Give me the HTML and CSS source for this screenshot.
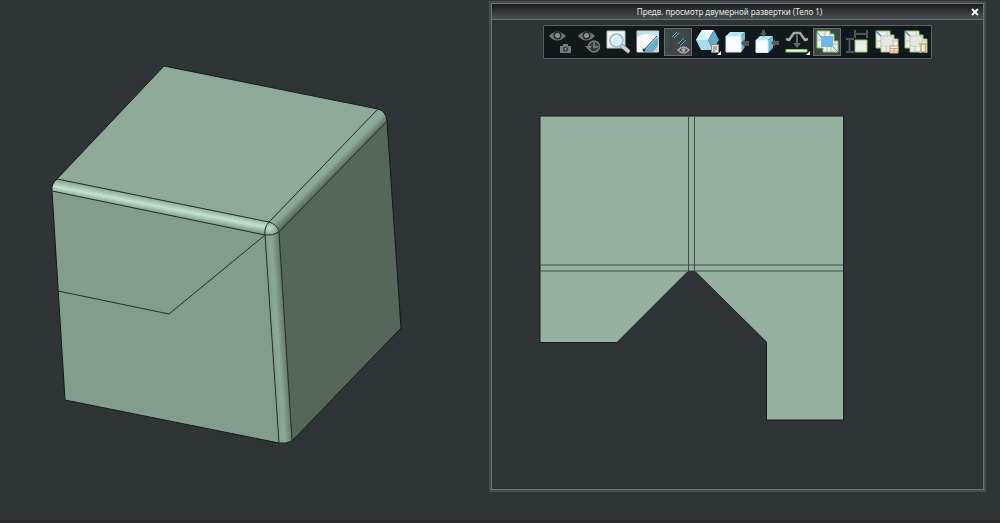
FILE: index.html
```html
<!DOCTYPE html>
<html lang="ru">
<head>
<meta charset="utf-8">
<title>Предв. просмотр двумерной развертки</title>
<link rel="stylesheet" href="styles.css">
</head>
<body>
<main class="workspace">
  <section class="scene" aria-label="Модель">
    <svg class="model" viewBox="0 0 489 520" preserveAspectRatio="xMinYMin meet">
      <defs>
        <linearGradient id="rollLeft" gradientUnits="userSpaceOnUse" x1="160" y1="200" x2="157.500" y2="213">
          <stop offset="0" stop-color="#8faa99"/><stop offset=".5" stop-color="#c2e3d0"/><stop offset="1" stop-color="#829d8c"/>
        </linearGradient>
        <linearGradient id="rollRight" gradientUnits="userSpaceOnUse" x1="323" y1="165" x2="334" y2="176">
          <stop offset="0" stop-color="#8eaa98"/><stop offset=".45" stop-color="#8ca997"/><stop offset="1" stop-color="#56665b"/>
        </linearGradient>
        <linearGradient id="rollDown" gradientUnits="userSpaceOnUse" x1="272" y1="340" x2="287" y2="339">
          <stop offset="0" stop-color="#839e8d"/><stop offset=".4" stop-color="#8baa98"/><stop offset="1" stop-color="#5d6f63"/>
        </linearGradient>
        <radialGradient id="corner" cx=".35" cy=".45" r=".7">
          <stop offset="0" stop-color="#c0e2ce"/><stop offset="1" stop-color="#789482"/>
        </radialGradient>
      </defs>
      <path fill="#8ea998" d="M164 66 378 109 269 222 57 179Z"/>
      <path fill="#829d8c" d="M52 191 265 235 279 443 65 400Z"/>
      <path fill="#56665b" d="M387 121 401 328 292 441 279 232Z"/>
      <path fill="url(#rollLeft)" d="M57 179 269 222 265 235 52 191Q51 184 57 179Z"/>
      <path fill="url(#rollRight)" d="M269 222 378 109Q386 111 387 121L279 232Z"/>
      <path fill="url(#rollDown)" d="M265 235 279 232 292 441Q287 444 279 443Z"/>
      <path fill="url(#corner)" d="M269 222Q277 224 279 232 273 236 265 235 264 227 269 222Z"/>
      <path class="edge" d="M57 179 164 66 378 109Q386 111 387 121L401 328 292 441Q287 444 279 443L65 400 52 191Q51 184 57 179Z"/>
      <path class="edge thin" d="M57 179 269 222 378 109M52 191 265 235 279 443M387 121 279 232 292 441M269 222Q277 224 279 232 273 236 265 235 264 227 269 222ZM58 291 169 314 265 235"/>
    </svg>
  </section>

  <section class="dialog" aria-labelledby="dialog-title">
    <header class="titlebar">
      <h1 class="title" id="dialog-title">Предв. просмотр двумерной развертки (Тело 1)</h1>
      <button class="close" type="button" aria-label="Закрыть"><svg viewBox="0 0 8 8"><path d="M1 1 7 7M7 1 1 7"/></svg></button>
    </header>
    <div class="toolbar" role="toolbar" aria-label="Вид">
      <button class="tool" type="button" aria-label="Камера"><svg viewBox="0 0 28 28">
        <path fill="#747677" d="M4 8Q12-1 21 8 12 17 4 8Z"/><circle cx="12.500" cy="7.500" r="4" fill="#252b2e"/><circle cx="12.500" cy="7.500" r="2.500" fill="#8b8d8e"/>
        <path fill="#77797a" d="M15 18h3v-2h5v2h3v7H15Z"/><circle cx="20.500" cy="21" r="2.500" fill="#3a3f41"/><circle cx="20.500" cy="21" r="1" fill="#999"/>
      </svg></button>
      <button class="tool" type="button" aria-label="История"><svg viewBox="0 0 28 28">
        <path fill="#747677" d="M4 8Q12-1 21 8 12 17 4 8Z"/><circle cx="12.500" cy="7.500" r="4" fill="#252b2e"/><circle cx="12.500" cy="7.500" r="2.500" fill="#8b8d8e"/>
        <circle cx="20" cy="18.500" r="5.500" fill="#343a3c" stroke="#77797a" stroke-width="1.500"/><path d="M20 14v5h4" fill="none" stroke="#888" stroke-width="1.500"/><path d="M11 18h7l-3.500 4Z" fill="#77797a"/>
      </svg></button>
      <button class="tool" type="button" aria-label="Масштаб"><svg viewBox="0 0 28 28">
        <path fill="#f4f4f1" stroke="#c6c2b8" d="M3 3H21V20H3Z"/><path d="m18 18 6 5" stroke="#777" stroke-width="4.500" stroke-linecap="round"/><path d="m18 18 6 5" stroke="#d2d2cf" stroke-width="3" stroke-linecap="round"/>
        <circle cx="12.500" cy="12.500" r="6.500" fill="#d7f0fb" stroke="#8bbccc" stroke-width="1.500"/><path d="M8 13a5 5 0 0 1 5-5" fill="none" stroke="#fff" stroke-width="2"/>
      </svg></button>
      <button class="tool" type="button" aria-label="Отображение"><svg viewBox="0 0 28 28">
        <path fill="#b9e1ee" stroke="#d4d0c6" d="M3 3H24.500V24H3Z"/><path fill="#6caec8" d="M9 24 24 9V24Z"/><path fill="#fafaf8" d="M3 9Q13 3 24 8L10 22Q8 18 3 17Z"/><path fill="#fafaf8" d="M3 15 9 22V24H3Z"/><path fill="#b5dfee" d="M18 24q5-3 6-8v8Z"/><path d="M10 22 23 8" stroke="#1c4354"/><circle cx="10" cy="22" r="1.500" fill="#183b4b"/>
      </svg></button>
      <button class="tool active" type="button" aria-pressed="true" aria-label="Линии сгиба"><svg viewBox="0 0 28 28">
        <path d="m9 9 5-4M15 17l6-6" stroke="#27434b" stroke-width="4"/><path d="m8 9 5-5M10 10l5-5M14 16l6-6M16 18l6-6" stroke="#6fb3bf"/><path d="M5 6l3-2M15 5l5 3M9 17l4-2" stroke="#54494a"/>
        <path d="M14 22Q19.500 16 25 22 19.500 28 14 22Z" fill="#444" stroke="#aaa" stroke-width="1.500"/><circle cx="19.500" cy="22" r="2" fill="#aaa"/>
      </svg></button>
      <button class="tool" type="button" aria-label="Ориентация"><svg viewBox="0 0 28 28">
        <path fill="#effbff" d="M8 2H20L14 12H2Z"/><path fill="#a9dcec" d="M2 12H14L19 22H7Z"/><path fill="#67acc9" d="M20 2 25 12 19 22 14 12Z"/><path fill="#d6f2fa" d="M8 2 14 12H2Z"/>
        <path fill="#e2e2df" stroke="#888" d="M17.500 16.500h7v8h-7Z"/><path d="M19 19h4M19 21h4M19 23h2" stroke="#777"/><path fill="#fff" d="M27 23v4h-4Z"/>
      </svg></button>
      <button class="tool" type="button" aria-label="Вид справа"><svg viewBox="0 0 28 28">
        <path fill="#b5e6f6" d="M3 8 7 4H22L18 8Z"/><path fill="#73b9d3" d="M18 8 22 4V19L18 24Z"/><path fill="#f8fdff" stroke="#cfe9f1" d="M3 8H18V24H3Z"/><path fill="#595959" d="m18 15 4-4v2h4v5h-4v2Z"/>
      </svg></button>
      <button class="tool" type="button" aria-label="Виды"><svg viewBox="0 0 28 28">
        <path fill="#b5e6f6" d="m3 12 4-4H20L15 12Z"/><path fill="#73b9d3" d="m15 12 5-4V20L15 25Z"/><path fill="#f8fdff" stroke="#cfe9f1" d="M3 12H15V24.500H3Z"/><path fill="#5b5b5b" d="M9 2h3v3h2l-3.500 4L7 5h2ZM18 15l4-4v2h4v4h-4v2Z"/>
      </svg></button>
      <button class="tool" type="button" aria-label="Развернуть"><svg viewBox="0 0 28 28">
        <path d="m3 11 3 1 5-7h6l5 7 3-1" fill="none" stroke="#aaa9a5" stroke-width="2.500"/><path fill="#666" d="M13 7h2v8h3l-4 5L10 15h3Z"/><path fill="#f4f7ee" stroke="#8ac660" d="M3 21.500H24V24H3Z"/><path fill="#fff" d="M27 23v4h-4Z"/>
      </svg></button>
      <button class="tool active" type="button" aria-pressed="true" aria-label="Развертка"><svg viewBox="0 0 28 28">
        <path fill="#eef2ec" stroke="#8bc46b" d="M4 3H17V6H21V13H25V24H10V20H4Z"/><path d="M4 12h4M20 16h5M12 3v6M17 6v3M14 19v5M18 19v5" stroke="#aebca9"/><path fill="#70b7ec" d="M8 8H20V19H8Z"/><path d="m4 4 4 5m12 10 5 5" stroke="#4d9cc8"/>
      </svg></button>
      <button class="tool" type="button" aria-label="Размеры"><svg viewBox="0 0 28 28">
        <path fill="none" stroke="#505456" stroke-width="2" d="M3 11h8M3 24h8M6.500 11v13M12 2v8M24 2v8M12 6h12"/><path fill="#ececea" stroke="#8bc46b" d="M12 12H24V24H12Z"/>
      </svg></button>
      <button class="tool" type="button" aria-label="Таблица"><svg viewBox="0 0 28 28">
        <path fill="#eeeeeb" stroke="#91c775" d="M3 3H17V7H21V11H25V24H8V20H3Z"/><path d="M3 13h5M19 13h6M8 8h12M8 8v12M14 3v5M13 18v6M8 18h12M20 8v10" stroke="#bcc8b6"/><path fill="#e5e5e3" d="M9 9H19V18H9Z"/><path d="m3 3 5 5" stroke="#3798c7" stroke-width="1.500"/>
        <path fill="#fff6df" stroke="#cfa26a" d="M17 18h8v7h-8ZM17 20.500h8M17 23h8M21 20v5"/>
      </svg></button>
      <button class="tool" type="button" aria-label="Экспорт"><svg viewBox="0 0 28 28">
        <path fill="#eeeeeb" stroke="#91c775" d="M3 3H17V7H21V11H25V24H8V20H3Z"/><path d="M3 13h5M19 13h6M8 8h12M8 8v12M14 3v5M13 18v6M8 18h12M20 8v10" stroke="#bcc8b6"/><path fill="#e5e5e3" d="M9 9H19V18H9Z"/><path d="m3 3 5 5" stroke="#3798c7" stroke-width="1.500"/>
        <path fill="#e7eef0" stroke="#dba66a" stroke-width="1.500" d="M17 16h8M19 16v8M23.500 16v8M17 24h3M22.500 24h3"/>
      </svg></button>
    </div>
    <svg class="flat" viewBox="492 59 491 430" preserveAspectRatio="xMidYMin meet" role="img" aria-label="Развертка">
      <path fill="#95b09f" stroke="#151c18" d="M540 116H843.500V420H766.500V342L695 271.500H688L617 342.500H540Z"/>
      <path class="bend" d="M688.500 116V271M694.500 116V271M540 265H843M540 271H843"/>
    </svg>
  </section>
</main>
<footer class="strip"></footer>
</body>
</html>
```
FILE: styles.css
```css
* {
  box-sizing: border-box;
}

body {
  margin: 0;
  min-height: 100vh;
  display: flex;
  flex-direction: column;
  background: #2f3536;
  font-family: "Noto Sans", "Open Sans", sans-serif;
}

.workspace {
  flex: 1;
  display: grid;
  grid-template-columns: 489fr 497fr 14fr;
  align-items: start;
}

.model,
.flat {
  display: block;
  width: 100%;
}

.edge {
  fill: none;
  stroke: #141a17;
}

.thin {
  stroke: #26312b;
}

.bend {
  fill: none;
  stroke: #3f4f46;
}

.dialog {
  margin-top: 1px;
  border: 2px solid #484d51;
  outline: 1px solid #6d7377;
  outline-offset: -3px;
  padding: 1px;
}

.titlebar {
  display: flex;
  align-items: center;
  height: 16px;
  border-bottom: 1px solid #676d70;
  background: linear-gradient(#1b1d1d, #485052);
}

.title {
  flex: 1;
  margin: 0;
  font-size: 8px;
  line-height: 14px;
  font-weight: 400;
  text-align: center;
  color: #e6e8e7;
}

.close {
  display: flex;
  align-items: center;
  justify-content: center;
  width: 16px;
  height: 14px;
  padding: 0;
  border: 0;
  background: none;
}

.close svg {
  width: 8px;
  height: 8px;
  fill: none;
  stroke: #f5f5f5;
  stroke-width: 2;
}

.toolbar {
  display: flex;
  justify-content: space-between;
  align-items: center;
  width: fit-content;
  min-width: 79.4%;
  height: 34px;
  margin: 5px auto 0;
  padding: 0 1px;
  border: 1px solid #5b6062;
  border-radius: 1px;
  background: #11191c;
}

.tool {
  width: 28px;
  height: 28px;
  padding: 0;
  border: 0;
  background: none;
}

.tool svg {
  display: block;
  width: 28px;
  height: 28px;
}

.active {
  background: #404546;
  box-shadow: inset 0 0 0 1px #686c6d;
}

.strip {
  height: 3px;
  background: #292a30;
}
```
